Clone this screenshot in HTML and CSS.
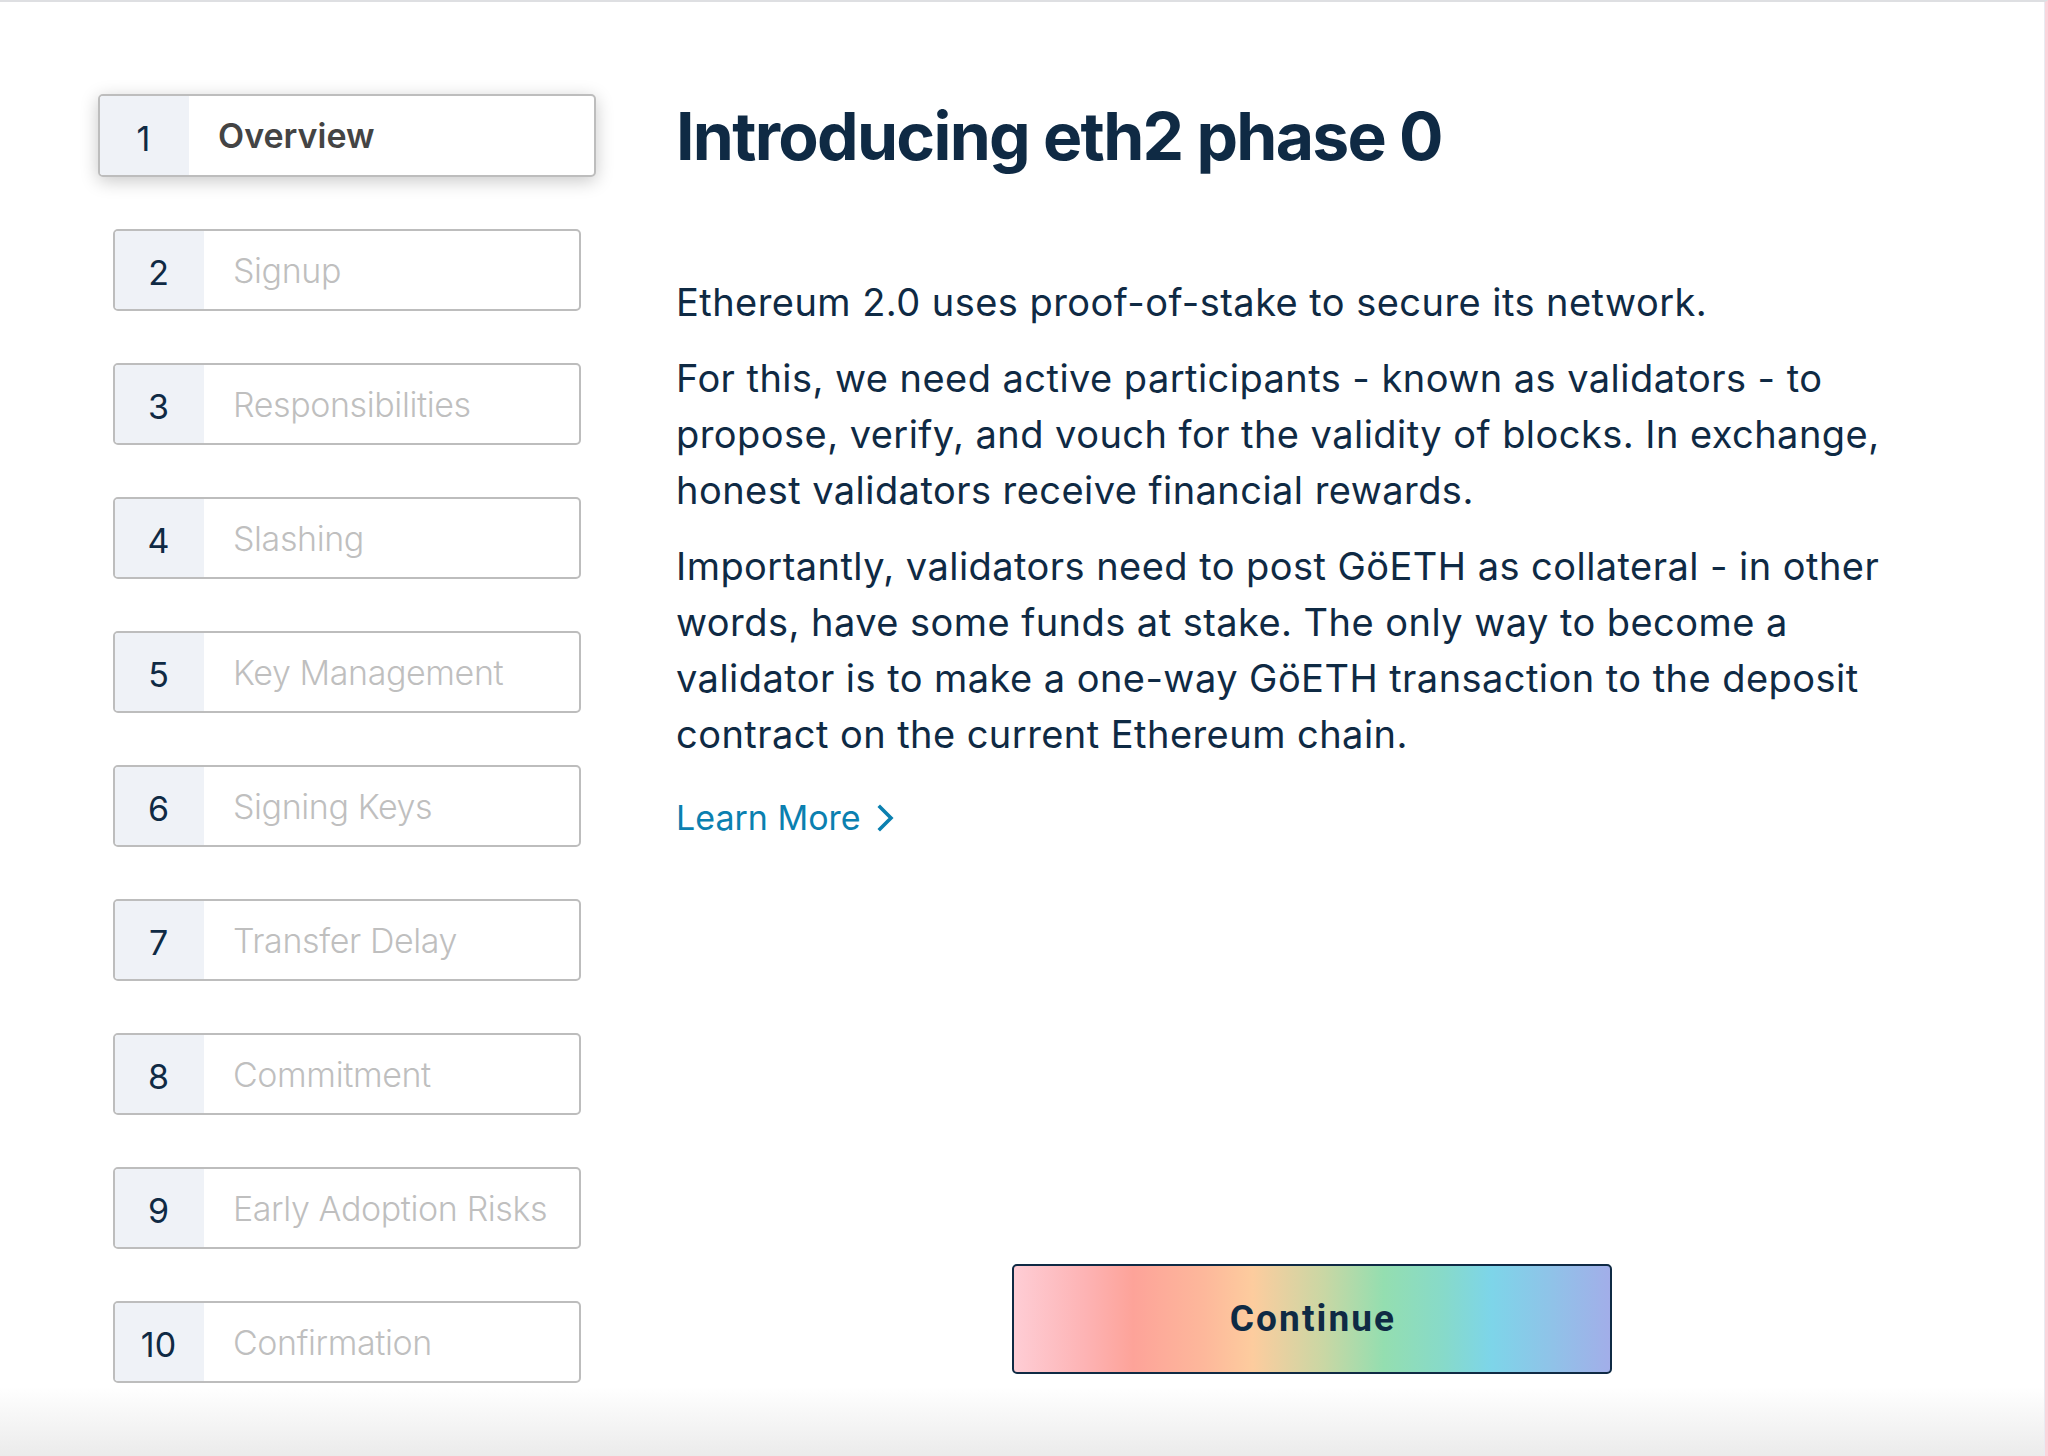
FILE: index.html
```html
<!DOCTYPE html>
<html lang="en">
<head>
<meta charset="utf-8">
<title>Introducing eth2 phase 0</title>
<link rel="stylesheet" href="styles.css">
</head>
<body>
<div class="page">
  <div class="frame">
    <nav class="steps">
      <div class="step active"><div class="step-num">1</div><div class="step-label">Overview</div></div>
      <div class="step"><div class="step-num">2</div><div class="step-label">Signup</div></div>
      <div class="step"><div class="step-num">3</div><div class="step-label">Responsibilities</div></div>
      <div class="step"><div class="step-num">4</div><div class="step-label">Slashing</div></div>
      <div class="step"><div class="step-num">5</div><div class="step-label">Key Management</div></div>
      <div class="step"><div class="step-num">6</div><div class="step-label">Signing Keys</div></div>
      <div class="step"><div class="step-num">7</div><div class="step-label">Transfer Delay</div></div>
      <div class="step"><div class="step-num">8</div><div class="step-label">Commitment</div></div>
      <div class="step"><div class="step-num">9</div><div class="step-label">Early Adoption Risks</div></div>
      <div class="step"><div class="step-num">10</div><div class="step-label">Confirmation</div></div>
    </nav>
    <main class="content">
      <h1 class="title">Introducing eth2 phase 0</h1>
      <p class="para first">Ethereum 2.0 uses proof-of-stake to secure its network.</p>
      <p class="para">For this, we need active participants - known as validators - to propose, verify, and vouch for the validity of blocks. In exchange, honest validators receive financial rewards.</p>
      <p class="para">Importantly, validators need to post GöETH as collateral - in other words, have some funds at stake. The only way to become a validator is to make a one-way GöETH transaction to the deposit contract on the current Ethereum chain.</p>
      <a class="learn" href="#">Learn More<svg class="chev" width="18" height="28" viewBox="0 0 18 28"><path d="M3 3 L14 14 L3 25" fill="none" stroke="#0b80b0" stroke-width="3.6" stroke-linecap="square"/></svg></a>
      <div class="actions"><button class="continue">Continue</button></div>
    </main>
  </div>
</div>
</body>
</html>
```

FILE: styles.css
```css
html, body {
  margin: 0;
  padding: 0;
  background: #ffffff;
}

.page {
  height: 1456px;
  box-sizing: border-box;
  border-top: 2px solid #dedfe2;
  border-right: 3px solid #fbd4db;
  background: linear-gradient(to bottom, #ffffff 0px, #ffffff 1385px, #ebebeb 1454px);
  font-family: "Inter", "Liberation Sans", sans-serif;
  color: #0f2a44;
}

.frame {
  height: 100%;
  box-sizing: border-box;
  border-right: 1px solid #e9ebf2;
  display: flex;
}

.steps {
  display: flex;
  flex-direction: column;
  gap: 52px;
  padding: 92px 0 0 113px;
  width: 468px;
  flex: none;
}

.step {
  display: flex;
  height: 82px;
  box-sizing: border-box;
  border: 2px solid #bdbdbd;
  border-radius: 5px;
  overflow: hidden;
  background: #ffffff;
}

.step-num {
  width: 89px;
  flex: none;
  background: #eff2f7;
  display: flex;
  align-items: center;
  justify-content: center;
  font-size: 34px;
  font-weight: 400;
  color: #0f2a44;
  padding: 5px 2px 0 0;
  box-sizing: border-box;
}

.step-label {
  display: flex;
  align-items: center;
  padding-left: 29px;
  font-size: 34px;
  font-weight: 300;
  color: #bfbfbf;
  letter-spacing: -0.4px;
  white-space: nowrap;
}

.step.active {
  margin: 0 -15px;
  height: 83px;
  box-shadow: 0 4px 18px rgba(0, 0, 0, 0.22);
}

.step.active .step-label {
  font-weight: 600;
  color: #444444;
  padding-left: 29px;
  letter-spacing: 0;
}

.content {
  flex: 1;
  display: flex;
  flex-direction: column;
  align-items: flex-start;
  padding: 0 96px 82px 95px;
}

.title {
  margin: 94px 0 0 0;
  font-size: 66px;
  line-height: 80px;
  font-weight: 700;
  letter-spacing: -1.7px;
  color: #0f2a44;
}

.para {
  margin: 20px 0 0 0;
  max-width: 1210px;
  font-size: 38px;
  line-height: 56px;
  font-weight: 400;
  letter-spacing: 0.45px;
  color: #0f2a44;
}

.para.first {
  margin-top: 98px;
}

.learn {
  margin-top: 28px;
  display: flex;
  align-items: center;
  gap: 16px;
  font-size: 34px;
  line-height: 56px;
  color: #0b80b0;
  text-decoration: none;
}

.chev {
  display: block;
}

.actions {
  margin-top: auto;
  align-self: stretch;
  display: flex;
  justify-content: center;
}

.continue {
  width: 600px;
  height: 110px;
  border: 2px solid #0f2a44;
  border-radius: 5px;
  background: linear-gradient(to right, #fecdd5 0%, #fdb3b4 12%, #fda399 20%, #fdb89b 32%, #fdcc9e 40%, #c9d7a4 52%, #94deb0 62%, #87dac9 72%, #7dd5e9 80%, #8fc3e8 90%, #a2aee9 100%);
  font-family: "Roboto", "Liberation Sans", sans-serif;
  font-size: 37px;
  font-weight: 700;
  letter-spacing: 2.1px;
  color: #0f2a44;
  padding: 0 0 2px 2px;
  cursor: pointer;
}
```
